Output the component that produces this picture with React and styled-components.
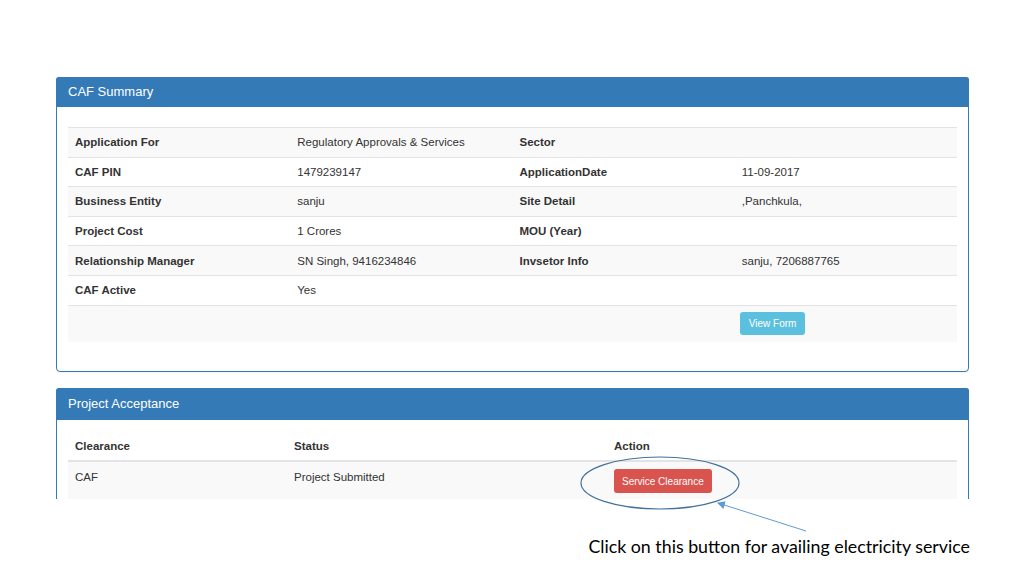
import React from "react";
import styled, { createGlobalStyle } from "styled-components";

const GlobalStyle = createGlobalStyle`
  html, body {
    margin: 0;
    padding: 0;
    background: #fff;
  }
  body {
    font-family: "Liberation Sans", Arial, sans-serif;
    color: #333;
  }
`;

const Page = styled.div`
  position: relative;
  width: 1024px;
  height: 576px;
  overflow: hidden;
  background: #fff;
`;

const Content = styled.div`
  display: flex;
  flex-direction: column;
  width: 913px;
  padding: 77px 0 0 56px;
`;

const Panel = styled.div`
  border: 1px solid #337ab7;
  border-radius: 4px;
  background: #fff;
  box-shadow: 0 1px 1px rgba(0, 0, 0, 0.05);
`;

const PanelHeading = styled.div`
  background: #337ab7;
  color: #fff;
  font-size: 13px;
  height: ${(p) => p.$h}px;
  line-height: ${(p) => p.$h - 2}px;
  padding: 0 11px;
  border-radius: 3px 3px 0 0;
  margin: -1px -1px 0;
  border: 1px solid #337ab7;
  border-bottom: none;
`;

const PanelBody = styled.div`
  padding: ${(p) => p.$pad};
`;

const Crop = styled.div`
  margin-top: 16px;
  height: 111px;
  overflow: hidden;
`;

const Table = styled.table`
  width: 100%;
  border-collapse: collapse;
  table-layout: fixed;
  font-size: 11.5px;
`;

const Row = styled.tr`
  background: ${(p) => (p.$striped ? "#f9f9f9" : "#fff")};
  height: ${(p) => p.$h || 29.6}px;
`;

const Cell = styled.td`
  padding: 0 7px;
  border-top: 1px solid #e3e3e3;
  font-weight: ${(p) => (p.$bold ? 700 : 400)};
  vertical-align: middle;
  white-space: nowrap;
`;

const TopCell = styled.td`
  padding: 7px 7px 0;
  line-height: 17px;
  vertical-align: top;
  white-space: nowrap;
`;

const HeadCell = styled.th`
  padding: 0 7px;
  text-align: left;
  font-weight: 700;
  border-bottom: 2px solid #e3e3e3;
  vertical-align: middle;
  height: 28px;
`;

const Button = styled.button`
  display: block;
  border: none;
  border-radius: 3px;
  color: #fff;
  font-family: "Liberation Sans", Arial, sans-serif;
  font-size: 10px;
  height: ${(p) => p.$h}px;
  padding: 0 ${(p) => p.$px}px;
  margin-left: ${(p) => p.$ml || 0}px;
  background: ${(p) => p.$bg};
  cursor: pointer;
`;

const Caption = styled.div`
  align-self: flex-end;
  margin-top: 36px;
  margin-right: -1px;
  font-family: Lato, "Open Sans", sans-serif;
  font-size: 17.8px;
  color: #000;
`;

const Overlay = styled.svg`
  position: absolute;
  left: 0;
  top: 0;
  pointer-events: none;
`;

const summary = [
  ["Application For", "Regulatory Approvals & Services", "Sector", ""],
  ["CAF PIN", "1479239147", "ApplicationDate", "11-09-2017"],
  ["Business Entity", "sanju", "Site Detail", ",Panchkula,"],
  ["Project Cost", "1 Crores", "MOU (Year)", ""],
  ["Relationship Manager", "SN Singh, 9416234846", "Invsetor Info", "sanju, 7206887765"],
  ["CAF Active", "Yes", "", ""],
];

export default function App() {
  return (
    <Page>
      <GlobalStyle />
      <Content>
        <Panel>
          <PanelHeading $h={29}>CAF Summary</PanelHeading>
          <PanelBody $pad="20px 11px 29px">
            <Table>
              <tbody>
                {summary.map((r, i) => (
                  <Row key={r[0]} $striped={i % 2 === 0}>
                    <Cell $bold>{r[0]}</Cell>
                    <Cell>{r[1]}</Cell>
                    <Cell $bold>{r[2]}</Cell>
                    <Cell>{r[3]}</Cell>
                  </Row>
                ))}
                <Row $striped $h={37}>
                  <Cell />
                  <Cell />
                  <Cell />
                  <Cell>
                    <Button $bg="#5bc0de" $h={23} $px={9} $ml={-2}>View Form</Button>
                  </Cell>
                </Row>
              </tbody>
            </Table>
          </PanelBody>
        </Panel>

        <Crop>
          <Panel>
            <PanelHeading $h={31}>Project Acceptance</PanelHeading>
            <PanelBody $pad="12px 11px 20px">
              <Table>
                <colgroup>
                  <col style={{ width: 219 }} />
                  <col style={{ width: 320 }} />
                  <col />
                </colgroup>
                <thead>
                  <tr>
                    <HeadCell>Clearance</HeadCell>
                    <HeadCell>Status</HeadCell>
                    <HeadCell>Action</HeadCell>
                  </tr>
                </thead>
                <tbody>
                  <Row $striped $h={40}>
                    <TopCell>CAF</TopCell>
                    <TopCell>Project Submitted</TopCell>
                    <TopCell>
                      <Button $bg="#d9534f" $h={24} $px={8}>Service Clearance</Button>
                    </TopCell>
                  </Row>
                </tbody>
              </Table>
            </PanelBody>
          </Panel>
        </Crop>

        <Caption>Click on this button for availing electricity service</Caption>
      </Content>

      <Overlay width="1024" height="576" viewBox="0 0 1024 576">
        <defs>
          <marker id="head" markerWidth="8" markerHeight="8" refX="7" refY="4" orient="auto">
            <path d="M0 0 L8 4 L0 8 Z" fill="#5b9bd5" />
          </marker>
        </defs>
        <ellipse cx="660" cy="483" rx="79" ry="26" fill="none" stroke="#41719c" strokeWidth="1.2" />
        <line x1="806" y1="531" x2="718" y2="503" stroke="#5b9bd5" strokeWidth="1" markerEnd="url(#head)" />
      </Overlay>
    </Page>
  );
}
